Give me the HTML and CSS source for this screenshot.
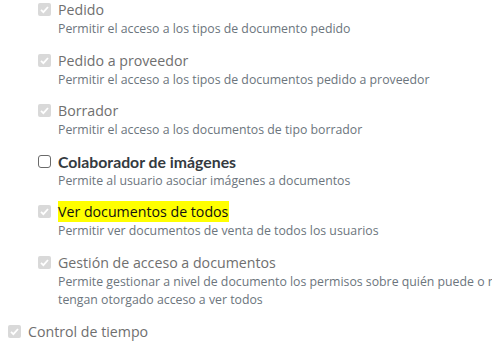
FILE: index.html
```html
<!DOCTYPE html>
<html lang="es">
<head>
<meta charset="utf-8">
<link rel="stylesheet" href="styles.css">
</head>
<body>
<div class="perms">
  <ul class="sub">
    <li class="item">
      <div class="title"><span class="cb checked"><svg viewBox="0 0 13 13"><path d="M3 6.8 L5.4 9.2 L10 4" /></svg></span><span class="label">Pedido</span></div>
      <div class="desc">Permitir el acceso a los tipos de documento pedido</div>
    </li>
    <li class="item">
      <div class="title"><span class="cb checked"><svg viewBox="0 0 13 13"><path d="M3 6.8 L5.4 9.2 L10 4" /></svg></span><span class="label">Pedido a proveedor</span></div>
      <div class="desc">Permitir el acceso a los tipos de documentos pedido a proveedor</div>
    </li>
    <li class="item">
      <div class="title"><span class="cb checked"><svg viewBox="0 0 13 13"><path d="M3 6.8 L5.4 9.2 L10 4" /></svg></span><span class="label">Borrador</span></div>
      <div class="desc">Permitir el acceso a los documentos de tipo borrador</div>
    </li>
    <li class="item">
      <div class="title"><span class="cb empty"></span><span class="label strong">Colaborador de imágenes</span></div>
      <div class="desc">Permite al usuario asociar imágenes a documentos</div>
    </li>
    <li class="item">
      <div class="title"><span class="cb checked"><svg viewBox="0 0 13 13"><path d="M3 6.8 L5.4 9.2 L10 4" /></svg></span><span class="label mark">Ver documentos de todos</span></div>
      <div class="desc">Permitir ver documentos de venta de todos los usuarios</div>
    </li>
    <li class="item">
      <div class="title"><span class="cb checked"><svg viewBox="0 0 13 13"><path d="M3 6.8 L5.4 9.2 L10 4" /></svg></span><span class="label">Gestión de acceso a documentos</span></div>
      <div class="desc wide">Permite gestionar a nivel de documento los permisos sobre quién puede o no verlo a los usuarios que no<br>tengan otorgado acceso a ver todos</div>
    </li>
  </ul>
  <div class="title top"><span class="cb checked"><svg viewBox="0 0 13 13"><path d="M3 6.8 L5.4 9.2 L10 4" /></svg></span><span class="label">Control de tiempo</span></div>
</div>
</body>
</html>
```

FILE: styles.css
```css
html, body {
  overflow: hidden;
}
body {
  margin: 0;
  padding: 0 8px;
  font-family: "Open Sans", "Noto Sans", sans-serif;
  background: #fff;
}
.perms {
  width: 760px;
}
.sub {
  list-style: none;
  margin: 0;
  padding: 0 0 0 30px;
}
.item {
  margin-top: 0;
  margin-bottom: 11.6px;
}
.item:first-child {
  margin-top: -1px;
}
.title {
  display: flex;
  align-items: center;
  gap: 7px;
  height: 21px;
  font-size: 14.2px;
  color: #6f6f6f;
  white-space: nowrap;
}
.title.top {
  margin-top: 7px;
}
.label {
  line-height: 21px;
}
.label.strong {
  font-family: "Lato", "Open Sans", sans-serif;
  font-size: 15.8px;
  font-weight: 700;
  color: #343a40;
}
.label.mark {
  background: #ffff00;
  color: #111;
  padding-right: 1px;
}
.cb {
  flex: none;
  width: 13px;
  height: 13px;
  box-sizing: border-box;
  border-radius: 2px;
  display: inline-flex;
}
.cb.checked {
  background: #d9d9d9;
}
.cb.checked svg {
  width: 13px;
  height: 13px;
}
.cb.checked path {
  fill: none;
  stroke: #fff;
  stroke-width: 1.8;
}
.cb.empty {
  border: 1px solid #6a6a6a;
  border-radius: 3px;
  background: #fff;
}
.desc {
  padding-left: 20px;
  font-size: 12.3px;
  line-height: 18px;
  color: #6c757d;
  white-space: nowrap;
}
```
